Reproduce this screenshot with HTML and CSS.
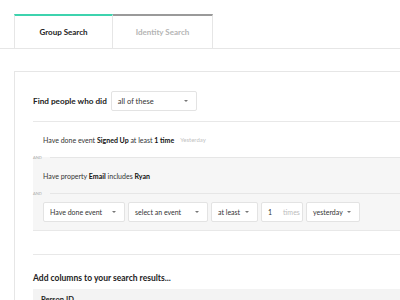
FILE: index.html
```html
<!DOCTYPE html>
<html lang="en">
<head>
  <meta charset="UTF-8" />
  <title>People Search</title>
  <link rel="stylesheet" href="styles.css">
</head>
<body>

  <div class="tabs">
    <div class="tab active">Group Search</div>
    <div class="tab">Identity Search</div>
  </div>

  <div class="card">
    <div class="find-row">
      <span class="find-label">Find people who did</span>
      <div class="select wide">all of these <span class="caret"></span></div>
    </div>

    <div class="conditions">
      <div class="cond">
        Have done event&nbsp;<b>Signed Up</b>&nbsp;at least&nbsp;<b>1 time</b>
        <span class="when">Yesterday</span>
      </div>
      <div class="cond-group">
        <div class="and"><span>AND</span><i></i></div>
        <div class="cond">
          Have property&nbsp;<b>Email</b>&nbsp;includes&nbsp;<b>Ryan</b>
        </div>
        <div class="and"><span>AND</span><i></i></div>
        <div class="cond edit">
          <div class="select s-event">Have done event <span class="caret"></span></div>
          <div class="select s-name">select an event <span class="caret"></span></div>
          <div class="select s-op">at least <span class="caret"></span></div>
          <div class="select s-count">1 <span class="unit">times</span></div>
          <div class="select s-time">yesterday <span class="caret"></span></div>
        </div>
      </div>
      <div class="cond-empty"></div>
    </div>

    <h3 class="columns-title">Add columns to your search results...</h3>
    <div class="columns-box">
      <div class="col-head">Person ID</div>
    </div>
  </div>

</body>
</html>
```

FILE: styles.css
```css
* { box-sizing: border-box; }
body {
  margin: 0;
  font-family: 'Lato', 'Open Sans', sans-serif;
  background: #fff;
  color: #222;
  overflow: hidden;
}

.tabs {
  display: flex;
  margin-top: 14px;
  padding-left: 14px;
  height: 35px;
  border-bottom: 1px solid #e6e6e6;
}

.tab {
  width: 100px;
  display: flex;
  align-items: center;
  justify-content: center;
  font-size: 8px;
  font-weight: 700;
  color: #b4b4b4;
  border-top: 2px solid #9a9a9a;
  border-right: 1px solid #e6e6e6;
}

.tab.active {
  width: 99px;
  color: #222;
  border-top-color: #3ed3ae;
  border-left: 1px solid #e6e6e6;
}

.card {
  margin: 22px 0 0 14px;
  border: 1px solid #e6e6e6;
  border-right: none;
  padding: 19px 0 0 18px;
  height: 400px;
}

.find-row {
  display: flex;
  align-items: center;
  gap: 4px;
  height: 20px;
  margin-bottom: 10px;
}

.find-label {
  font-size: 8.2px;
  font-weight: 700;
}

.select {
  flex-shrink: 0;
  display: flex;
  align-items: center;
  height: 20px;
  padding: 0 8px 0 6px;
  font-size: 7px;
  color: #333;
  background: #fff;
  border: 1px solid #e3e3e3;
  border-radius: 2px;
}

.caret {
  margin-left: auto;
  width: 0;
  height: 0;
  border-left: 2px solid transparent;
  border-right: 2px solid transparent;
  border-top: 2px solid #777;
}

.wide {
  width: 86px;
  font-size: 7.5px;
}

.conditions {
  border-top: 1px solid #e8e8e8;
}

.cond {
  display: flex;
  align-items: center;
  height: 35px;
  padding-left: 10px;
  font-size: 7px;
  color: #333;
}

.cond b {
  color: #111;
  font-weight: 700;
}

.when {
  margin-left: 6px;
  font-size: 6px;
  color: #c2c2c2;
}

.cond-group {
  background: #f6f6f6;
  border-bottom: 1px solid #e8e8e8;
}

.and {
  display: flex;
  align-items: center;
  height: 1px;
  gap: 8px;
}

.and span {
  font-size: 4px;
  color: #aaa;
}

.and i {
  flex: 1;
  height: 1px;
  background: #e6e6e6;
}

.cond.edit {
  gap: 3px;
  height: 36px;
}

.s-event { width: 82px; }
.s-name { width: 80px; }
.s-op { width: 47px; }
.s-count { width: 42px; gap: 11px; }
.s-time { width: 54px; }

.unit { color: #bbb; }

.cond-empty {
  height: 24px;
  border-bottom: 1px solid #e8e8e8;
}

.columns-title {
  margin: 18px 0 0;
  font-size: 8.5px;
  font-weight: 700;
}

.columns-box {
  margin-top: 6px;
  background: #f3f3f3;
  padding: 6px 8px;
}

.col-head {
  font-size: 7.5px;
  font-weight: 700;
}
```
